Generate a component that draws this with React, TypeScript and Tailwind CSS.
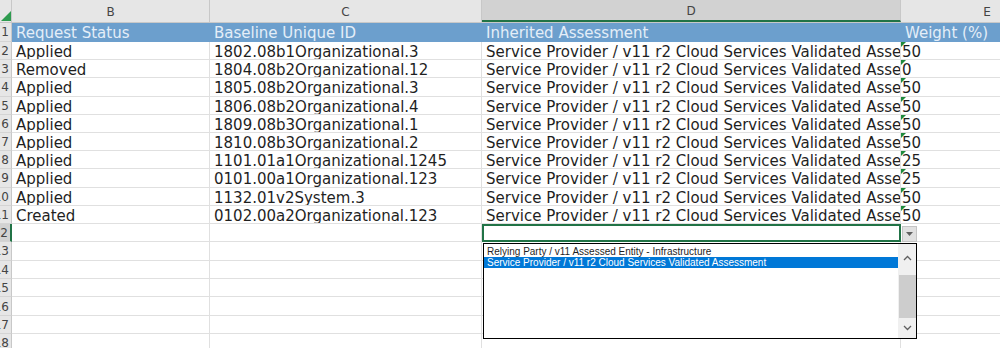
const rows = [
  { status: "Applied", id: "1802.08b1Organizational.3", weight: "50" },
  { status: "Removed", id: "1804.08b2Organizational.12", weight: "0" },
  { status: "Applied", id: "1805.08b2Organizational.3", weight: "50" },
  { status: "Applied", id: "1806.08b2Organizational.4", weight: "50" },
  { status: "Applied", id: "1809.08b3Organizational.1", weight: "50" },
  { status: "Applied", id: "1810.08b3Organizational.2", weight: "50" },
  { status: "Applied", id: "1101.01a1Organizational.1245", weight: "25" },
  { status: "Applied", id: "0101.00a1Organizational.123", weight: "25" },
  { status: "Applied", id: "1132.01v2System.3", weight: "50" },
  { status: "Created", id: "0102.00a2Organizational.123", weight: "50" },
];

const assessment = "Service Provider / v11 r2 Cloud Services Validated Assessment";

function RowNum({ n, selected }: { n: number; selected?: boolean }) {
  return (
    <div
      className={
        "w-[12px] shrink-0 overflow-hidden flex justify-end items-center pr-[2px] pt-[1px] text-[12px] text-[#444] border-b border-[#d4d4d4] " +
        (selected ? "bg-[#d2d2d2] border-r-2 border-r-[#217346]" : "bg-[#e6e6e6] border-r border-r-[#c8c8c8]")
      }
    >
      <span className="whitespace-nowrap">{n}</span>
    </div>
  );
}

function Marker() {
  return (
    <svg className="absolute left-0 top-0" width="5" height="5" viewBox="0 0 5 5">
      <polygon points="0,0 5,0 0,5" fill="#1e8a3c" />
    </svg>
  );
}

export default function App() {
  return (
    <div
      className="relative w-[1000px] h-[348px] overflow-hidden bg-white text-[#1f1f1f]"
      style={{ fontFamily: "Tahoma, 'DejaVu Sans', sans-serif" }}
    >
      {/* column headers */}
      <div className="flex h-[23px] bg-[#e6e6e6] text-[12px] leading-[12px] text-[#444] border-b border-[#c8c8c8]">
        <div className="relative w-[12px] shrink-0 border-r border-[#c8c8c8]">
          <svg className="absolute left-0 top-[10px]" width="12" height="12" viewBox="0 0 12 12">
            <polygon points="11,1 11,11 1,11" fill="#2e9b4f" />
          </svg>
        </div>
        <div className="w-[198px] shrink-0 flex items-end justify-center pb-[4px] border-r border-[#c8c8c8]">B</div>
        <div className="w-[272px] shrink-0 flex items-end justify-center pb-[4px] border-r border-[#c8c8c8]">C</div>
        <div className="w-[419px] shrink-0 flex items-end justify-center pb-[3px] bg-[#d2d2d2] border-b-2 border-[#217346] border-r border-r-[#c8c8c8]">
          D
        </div>
        <div className="w-[172px] shrink-0 flex items-end justify-center pb-[4px]">E</div>
      </div>

      {/* header row */}
      <div className="flex h-[19px] text-[15px] leading-[19px]">
        <RowNum n={1} />
        <div className="flex flex-1 bg-[#6c9fcd] text-[#e4eef8] pt-[1px]">
          <div className="w-[198px] shrink-0 pl-[4px] whitespace-nowrap overflow-hidden">Request Status</div>
          <div className="w-[272px] shrink-0 pl-[4px] whitespace-nowrap overflow-hidden">Baseline Unique ID</div>
          <div className="w-[419px] shrink-0 pl-[4px] whitespace-nowrap overflow-hidden">Inherited Assessment</div>
          <div className="w-[172px] shrink-0 pl-[4px] whitespace-nowrap overflow-hidden">Weight (%)</div>
        </div>
      </div>

      {/* data rows */}
      {rows.map((r, i) => (
        <div key={i} className="flex h-[18.2px] text-[15px] leading-[18px]">
          <RowNum n={i + 2} />
          <div className="w-[198px] shrink-0 pl-[4px] pt-[1px] whitespace-nowrap overflow-hidden border-r border-b border-[#e0e0e0]">
            {r.status}
          </div>
          <div className="w-[272px] shrink-0 pl-[4px] pt-[1px] whitespace-nowrap overflow-hidden border-r border-b border-[#e0e0e0]">
            {r.id}
          </div>
          <div className="w-[419px] shrink-0 pl-[4px] pt-[1px] whitespace-nowrap overflow-hidden border-r border-b border-[#e0e0e0]">
            {assessment}
          </div>
          <div className="relative w-[172px] shrink-0 pl-[1px] pt-[1px] whitespace-nowrap overflow-hidden border-b border-[#e0e0e0]">
            <Marker />
            {r.weight}
          </div>
        </div>
      ))}

      {/* empty rows */}
      {[12, 13, 14, 15, 16, 17, 18].map((n) => (
        <div key={n} className="flex h-[18.4px]">
          <RowNum n={n} selected={n === 12} />
          <div className="w-[198px] shrink-0 border-r border-b border-[#e0e0e0]" />
          <div className="w-[272px] shrink-0 border-r border-b border-[#e0e0e0]" />
          {n === 12 ? (
            <div className="w-[419px] shrink-0 border-2 border-[#217346]" />
          ) : (
            <div className="w-[419px] shrink-0 border-r border-b border-[#e0e0e0]" />
          )}
          <div className="w-[172px] shrink-0 border-b border-[#e0e0e0]" />
        </div>
      ))}

      {/* dropdown arrow button */}
      <div className="absolute left-[902px] top-[226px] w-[15px] h-[16px] bg-[#e1e1e1] border border-[#c4c4c4] flex items-center justify-center">
        <svg width="7" height="4" viewBox="0 0 7 4">
          <polygon points="0,0 7,0 3.5,4" fill="#606060" />
        </svg>
      </div>

      {/* validation list */}
      <div
        className="absolute left-[483px] top-[243px] w-[434px] h-[96px] bg-white border border-black flex text-[10px] leading-[11px]"
        style={{ fontFamily: "'Liberation Sans', Arial, sans-serif" }}
      >
        <div className="flex-1 pt-[2px]">
          <div className="h-[11px] pl-[3px] text-[#1f1f1f] whitespace-nowrap">Relying Party / v11 Assessed Entity - Infrastructure</div>
          <div className="h-[11px] pl-[3px] bg-[#0078d7] text-white whitespace-nowrap">{assessment}</div>
        </div>
        <div className="w-[18px] shrink-0 bg-[#f0f0f0] flex flex-col items-center">
          <div className="h-[22px] flex items-center justify-center pt-[6px]">
            <svg width="9" height="6" viewBox="0 0 9 6">
              <polyline points="1,5 4.5,1.5 8,5" fill="none" stroke="#606060" strokeWidth="1.3" />
            </svg>
          </div>
          <div className="w-[17px] h-[43px] mt-[9px] bg-[#cdcdcd]" />
          <div className="flex-1 flex items-center justify-center">
            <svg width="9" height="6" viewBox="0 0 9 6">
              <polyline points="1,1 4.5,4.5 8,1" fill="none" stroke="#606060" strokeWidth="1.3" />
            </svg>
          </div>
        </div>
      </div>
    </div>
  );
}
